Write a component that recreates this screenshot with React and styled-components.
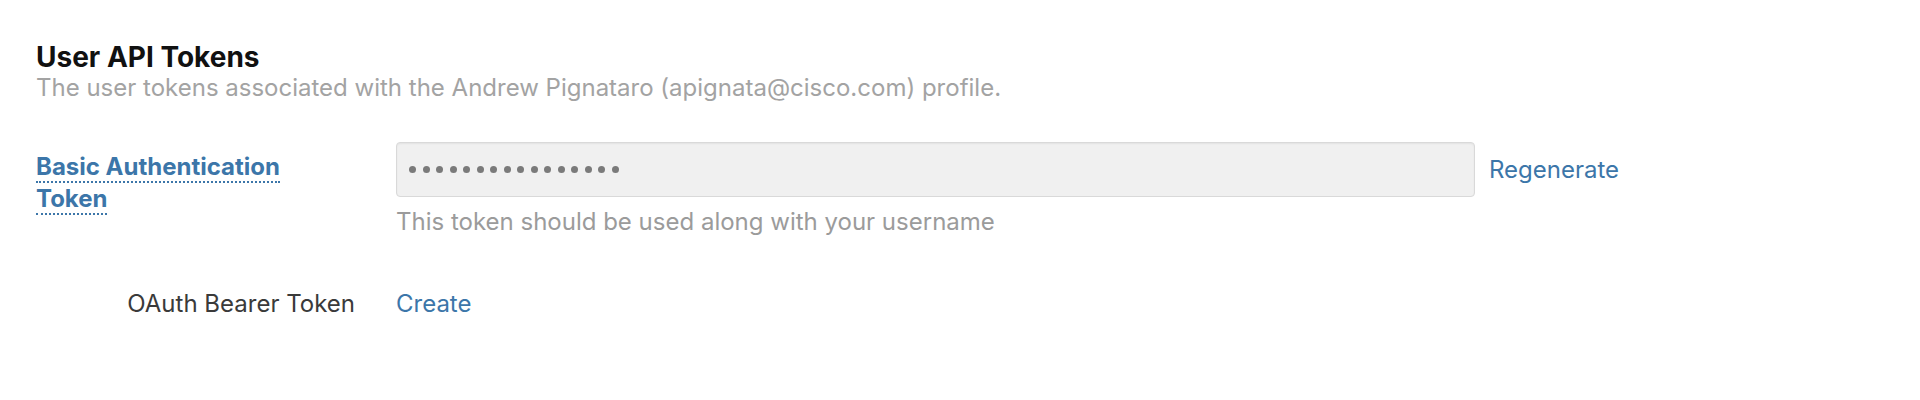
import React from "react"
import styled, { createGlobalStyle } from "styled-components"

const GlobalStyle = createGlobalStyle`
  body {
    margin: 0;
    background: #ffffff;
    font-family: Inter, "Noto Sans", "Liberation Sans", sans-serif;
  }
`

const Page = styled.div`
  padding: 41px 0 0 36px;
`

const Title = styled.h2`
  margin: 0;
  font-size: 28px;
  line-height: 32px;
  font-weight: 700;
  color: #111111;
`

const Subtitle = styled.p`
  margin: 2px 0 0;
  font-size: 24px;
  line-height: 26px;
  color: #a3a3a3;
`

const Row = styled.div`
  display: flex;
  align-items: flex-start;
  margin-top: ${props => props.top || 0}px;
`

const LabelCol = styled.div`
  width: 319px;
  flex: none;
  text-align: ${props => props.align || "left"};
  padding-top: ${props => props.pad || 0}px;
  font-size: 24px;
  line-height: ${props => props.lh || 29}px;
  color: #3a3a3a;
`

const TipLabel = styled.span`
  display: inline-block;
  max-width: 270px;
  font-weight: 700;
  color: #3c76a9;

  span {
    border-bottom: 2px dotted #3c76a9;
  }
`

const FieldCol = styled.div`
  margin-left: 41px;
  display: flex;
  flex-direction: column;
`

const FieldLine = styled.div`
  display: flex;
  align-items: center;
`

const TokenBox = styled.div`
  box-sizing: border-box;
  width: 1079px;
  height: 55px;
  padding-left: 12px;
  display: flex;
  align-items: center;
  gap: 6.5px;
  background: #f0f0f0;
  border: 1px solid #d9d9d9;
  border-radius: 4px;
  box-shadow: inset 0 1px 2px rgba(0, 0, 0, 0.06);
`

const Dot = styled.i`
  width: 7px;
  height: 7px;
  border-radius: 50%;
  background: #7a7a7a;
`

const Action = styled.a`
  margin-left: ${props => props.gap || 0}px;
  font-size: 24px;
  line-height: 29px;
  color: #3c76a9;
  text-decoration: none;
  cursor: pointer;
`

const Help = styled.p`
  margin: 10px 0 0;
  font-size: 24px;
  line-height: 29px;
  color: #9b9b9b;
`

export default function App() {
  return (
    <>
      <GlobalStyle />
      <Page>
        <Title>User API Tokens</Title>
        <Subtitle>
          The user tokens associated with the Andrew Pignataro
          (apignata@cisco.com) profile.
        </Subtitle>

        <Row top={41}>
          <LabelCol pad={9} lh={32}>
            <TipLabel>
              <span>Basic Authentication Token</span>
            </TipLabel>
          </LabelCol>
          <FieldCol>
            <FieldLine>
              <TokenBox>
                {Array.from({ length: 16 }).map((_, i) => (
                  <Dot key={i} />
                ))}
              </TokenBox>
              <Action gap={14}>Regenerate</Action>
            </FieldLine>
            <Help>This token should be used along with your username</Help>
          </FieldCol>
        </Row>

        <Row top={53}>
          <LabelCol align="right">OAuth Bearer Token</LabelCol>
          <FieldCol>
            <Action>Create</Action>
          </FieldCol>
        </Row>
      </Page>
    </>
  )
}
